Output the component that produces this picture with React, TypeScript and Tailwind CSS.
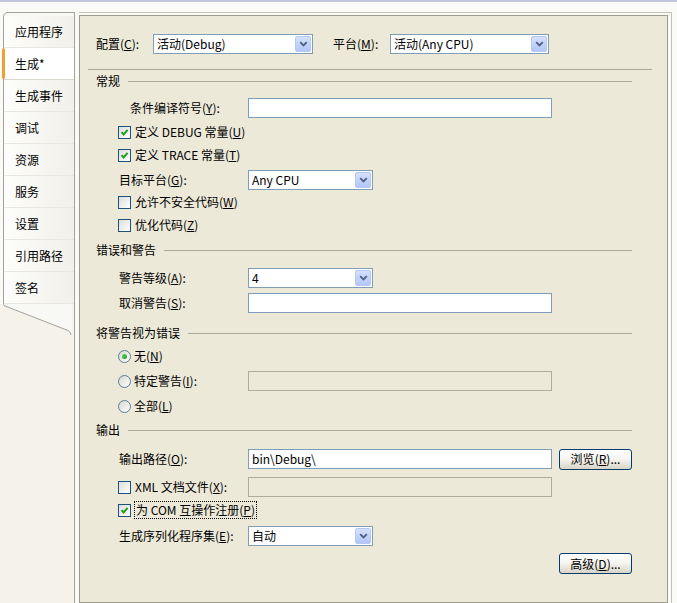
import React from 'react';

const tabs = ['应用程序', '生成*', '生成事件', '调试', '资源', '服务', '设置', '引用路径', '签名'];

const Mn = ({ t, k, end = '' }: { t: string; k: string; end?: string }) => (
  <span className="whitespace-nowrap">
    {t}(<span className="underline underline-offset-[1px]">{k}</span>){end}
  </span>
);

const Chevron = () => (
  <svg width="9" height="6" viewBox="0 0 9 6">
    <path d="M1.2 1.2 L4.5 4.5 L7.8 1.2" stroke="#4d6185" strokeWidth="1.8" fill="none" />
  </svg>
);

const Select = ({ value, w }: { value: string; w: string }) => (
  <div className={`${w} flex h-[20px] items-center border border-[#7f9db9] bg-white`}>
    <span className="flex-1 whitespace-nowrap pl-[3px] leading-[16px]">{value}</span>
    <div className="mr-[1px] flex h-[16px] w-[16px] items-center justify-center rounded-[2px] border border-[#b4c8f4] bg-gradient-to-b from-[#d4e0fc] to-[#b2c6f6]">
      <Chevron />
    </div>
  </div>
);

const Input = ({ value = '', disabled = false }: { value?: string; disabled?: boolean }) => (
  <div
    className={`flex h-[20px] w-[304px] items-center whitespace-nowrap pl-[3px] leading-[16px] ${
      disabled ? 'border border-[#aeab9f] bg-[#ece9d8]' : 'border border-[#7f9db9] bg-white'
    }`}
  >
    {value}
  </div>
);

const Check = ({ checked = false }: { checked?: boolean }) => (
  <div className="flex h-[13px] w-[13px] shrink-0 items-center justify-center border border-[#1c5180] bg-gradient-to-br from-[#dcdcd7] to-white">
    {checked && (
      <svg width="9" height="9" viewBox="0 0 9 9">
        <path d="M1.5 4.2 L3.6 6.5 L7.6 1.8" stroke="#21a121" strokeWidth="2" fill="none" />
      </svg>
    )}
  </div>
);

const Radio = ({ checked = false }: { checked?: boolean }) => (
  <div className="flex h-[13px] w-[13px] shrink-0 items-center justify-center rounded-full border border-[#5d7c9b] bg-gradient-to-br from-[#d6d6d0] to-white">
    {checked && <div className="h-[5px] w-[5px] rounded-full bg-gradient-to-br from-[#5cd85c] to-[#1f9a1f]" />}
  </div>
);

const Button = ({ children }: { children: React.ReactNode }) => (
  <div className="flex h-[21px] w-[73px] items-center justify-center rounded-[3px] border border-[#003c74] bg-gradient-to-b from-white via-[#f4f3ee] to-[#d8d4c6] leading-[16px]">
    {children}
  </div>
);

const Section = ({ title, mt }: { title: string; mt: string }) => (
  <div className={`${mt} ml-[16px] flex h-[20px] w-[536px] items-center`}>
    <span className="leading-[16px]">{title}</span>
    <div className="ml-[8px] flex-1 border-t border-[#aca899]" />
  </div>
);

export default function App() {
  return (
    <div className="flex h-[603px] w-[677px] flex-col overflow-hidden bg-[#fafaf7] font-['Noto_Sans_CJK_SC','Noto_Sans',sans-serif] text-[12px] text-black">
      <div className="h-[2px] bg-[#c3c7de]" />

      <div className="mt-[10px] flex flex-1">
        {/* left page tabs */}
        <div className="flex w-[79px] shrink-0 flex-col">
          <div className="ml-[3px] w-[72px] rounded-tl-[5px] border-l border-r border-t border-[#a3a39b] bg-[#f8f8f4] pt-[3px]">
            {tabs.map((t, i) => (
              <div
                key={t}
                className={`relative flex h-[32px] items-center border-b pl-[11px] leading-[16px] ${
                  i === 1
                    ? 'border-[#d9d7cd] bg-white'
                    : 'border-[#e8e6de] bg-gradient-to-r from-[#fdfdfb] to-[#f1f0ea]'
                }`}
              >
                {i === 1 && <span className="absolute bottom-0 left-[-2px] top-0 w-[3px] rounded-[2px] bg-[#f0a030]" />}
                {t}
              </div>
            ))}
          </div>
          <div className="flex w-[75px] flex-1 flex-col border-r border-[#a3a39b] bg-[#f4f2e9]">
            <svg width="72" height="32" viewBox="0 0 72 32" className="-mt-[1px]">
              <path d="M0 0 H72 V32 L69 28 L3.5 2.5 L3.5 0 Z" fill="#f8f8f4" />
              <path d="M3.5 0 V1.5 Q3.5 2.5 5 3 L68 27.5 Q70.5 28.5 71 32" stroke="#a3a39b" strokeWidth="1" fill="none" />
            </svg>
          </div>
        </div>

        {/* property page */}
        <div className="flex w-[593px] flex-col border-r border-t border-[#c4c1b5] pr-[3px] pt-[2px]">
          <div className="flex h-[588px] flex-col border border-[#9d9b90] bg-[#ece9d8]">
            <div className="ml-[16px] mt-[18px] flex h-[20px] items-center">
              <span className="w-[57px] leading-[16px]"><Mn t="配置" k="C" end=":" /></span>
              <Select w="w-[160px]" value="活动(Debug)" />
              <span className="ml-[20px] w-[57px] leading-[16px]"><Mn t="平台" k="M" end=":" /></span>
              <Select w="w-[159px]" value="活动(Any CPU)" />
            </div>
            <div className="ml-[8px] mt-[15px] w-[564px] border-t border-[#a9a79a]" />

            <Section title="常规" mt="mt-[1px]" />
            <div className="mt-[7px] flex h-[20px] items-center">
              <span className="ml-[50px] w-[118px] leading-[16px]"><Mn t="条件编译符号" k="Y" end=":" /></span>
              <Input />
            </div>
            <div className="ml-[38px] mt-[4px] flex h-[20px] items-center gap-[4px] leading-[16px]">
              <Check checked />
              <Mn t="定义 DEBUG 常量" k="U" />
            </div>
            <div className="ml-[38px] mt-[3px] flex h-[20px] items-center gap-[4px] leading-[16px]">
              <Check checked />
              <Mn t="定义 TRACE 常量" k="T" />
            </div>
            <div className="mt-[5px] flex h-[20px] items-center">
              <span className="ml-[39px] w-[129px] leading-[16px]"><Mn t="目标平台" k="G" end=":" /></span>
              <Select w="w-[125px]" value="Any CPU" />
            </div>
            <div className="ml-[38px] mt-[2px] flex h-[20px] items-center gap-[4px] leading-[16px]">
              <Check />
              <Mn t="允许不安全代码" k="W" />
            </div>
            <div className="ml-[38px] mt-[3px] flex h-[20px] items-center gap-[4px] leading-[16px]">
              <Check />
              <Mn t="优化代码" k="Z" />
            </div>

            <Section title="错误和警告" mt="mt-[5px]" />
            <div className="mt-[8px] flex h-[20px] items-center">
              <span className="ml-[39px] w-[129px] leading-[16px]"><Mn t="警告等级" k="A" end=":" /></span>
              <Select w="w-[125px]" value="4" />
            </div>
            <div className="mt-[5px] flex h-[20px] items-center">
              <span className="ml-[39px] w-[129px] leading-[16px]"><Mn t="取消警告" k="S" end=":" /></span>
              <Input />
            </div>

            <Section title="将警告视为错误" mt="mt-[10px]" />
            <div className="ml-[38px] mt-[3px] flex h-[20px] items-center gap-[3px] leading-[16px]">
              <Radio checked />
              <Mn t="无" k="N" />
            </div>
            <div className="mt-[5px] flex h-[20px] items-center">
              <div className="ml-[38px] flex w-[130px] items-center gap-[3px] leading-[16px]">
                <Radio />
                <Mn t="特定警告" k="I" end=":" />
              </div>
              <Input disabled />
            </div>
            <div className="ml-[38px] mt-[5px] flex h-[20px] items-center gap-[3px] leading-[16px]">
              <Radio />
              <Mn t="全部" k="L" />
            </div>

            <Section title="输出" mt="mt-[4px]" />
            <div className="mt-[9px] flex h-[20px] items-center">
              <span className="ml-[39px] w-[129px] leading-[16px]"><Mn t="输出路径" k="O" end=":" /></span>
              <Input value="bin\Debug\" />
              <div className="ml-[7px]">
                <Button><Mn t="浏览" k="R" end="..." /></Button>
              </div>
            </div>
            <div className="mt-[8px] flex h-[20px] items-center">
              <div className="ml-[38px] flex w-[130px] items-center gap-[4px] leading-[16px]">
                <Check />
                <Mn t="XML 文档文件" k="X" end=":" />
              </div>
              <Input disabled />
            </div>
            <div className="ml-[38px] mt-[3px] flex h-[20px] items-center gap-[3px] leading-[16px]">
              <Check checked />
              <span className="border border-dotted border-black px-[1px]">
                <Mn t="为 COM 互操作注册" k="P" />
              </span>
            </div>
            <div className="mt-[6px] flex h-[20px] items-center">
              <span className="ml-[39px] w-[129px] leading-[16px]"><Mn t="生成序列化程序集" k="E" end=":" /></span>
              <Select w="w-[125px]" value="自动" />
            </div>
            <div className="ml-[479px] mt-[7px]">
              <Button><Mn t="高级" k="D" end="..." /></Button>
            </div>
          </div>
        </div>
      </div>
    </div>
  );
}
